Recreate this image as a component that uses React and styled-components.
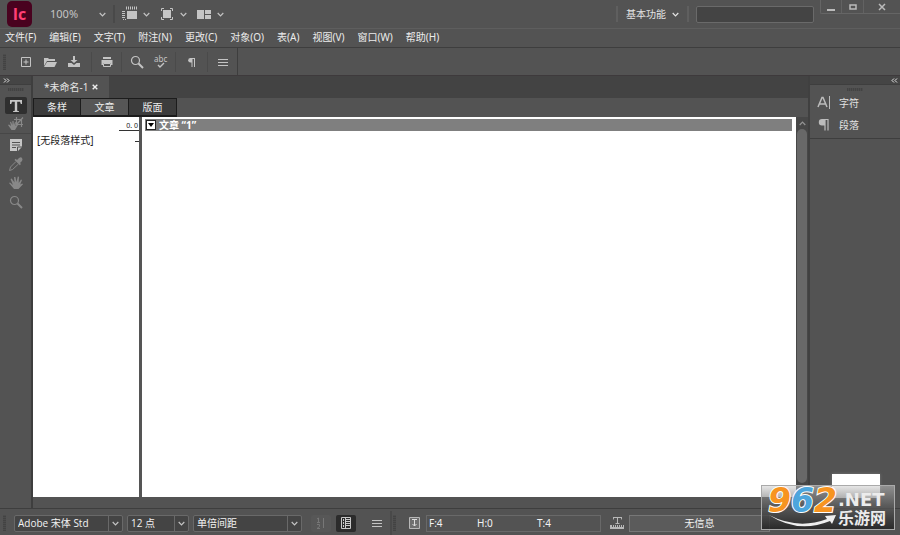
import React from "react";
import styled, { createGlobalStyle } from "styled-components";

const GlobalStyle = createGlobalStyle`
  * { box-sizing: border-box; }
  body {
    margin: 0;
    background: #535353;
    color: #e4e4e4;
    font: 10px/14px "Noto Sans", "Noto Sans CJK SC", sans-serif;
  }
  button, input, select { font: inherit; color: inherit; margin: 0; padding: 0; }
  svg { display: block; flex: none; }
`;

const Page = styled.div`
  display: flex;
  flex-direction: column;
  min-height: 100vh;
  position: relative;
  overflow: hidden;
`;

const PlainButton = styled.button`
  display: flex;
  align-items: center;
  justify-content: center;
  border: 0;
  background: none;
  color: #c4c4c4;
`;

/* Title bar */
const TitleBar = styled.header`
  display: flex;
  align-items: center;
  height: 28px;
  padding-left: 7px;
`;
const Logo = styled.div`
  width: 25px;
  height: 26px;
  border-radius: 5px;
  background: #49021f;
  color: #ff3f75;
  font: bold 16px/26px "Open Sans", sans-serif;
  text-align: center;
`;
const Zoom = styled(PlainButton)`
  width: 56px;
  margin-left: 18px;
  justify-content: space-between;
  font-size: 11px;
`;
const Separator = styled.span`
  width: 2px;
  height: ${(p) => p.$height || 18}px;
  margin: 0 ${(p) => p.$gap || 0}px;
  background: ${(p) => (p.$light ? "#5f5f5f" : "#494949")};
`;
const ViewButton = styled(PlainButton)`
  gap: 5px;
  width: 28px;
  margin-right: 9px;
`;
const Spacer = styled.span`
  flex: 1;
`;
const Workspace = styled(PlainButton)`
  gap: 6px;
  margin: 0 8px;
  color: #e4e4e4;
`;
const Search = styled.input`
  width: 118px;
  height: 17px;
  margin: 0 6px 0 7px;
  border: 1px solid #6a6a6a;
  border-radius: 2px;
  background: #444;
`;
const WindowControls = styled.div`
  display: flex;
  align-self: flex-start;
  width: 80px;
  height: 14px;
  border: 1px solid #656565;
  border-width: 0 0 1px 1px;
  border-bottom-left-radius: 2px;
`;
const WindowButton = styled(PlainButton)`
  flex: ${(p) => (p.$wide ? 37 : 21)};
  border-right: ${(p) => (p.$wide ? 0 : "1px solid #626262")};
`;

/* Menus and command bar */
const MenuBar = styled.nav`
  display: flex;
  align-items: center;
  gap: 13px;
  height: 20px;
  padding: 0 5px 2px;
  border-top: 1px solid #5e5e5e;
  border-bottom: 1px solid #3e3e3e;
`;
const MenuItem = styled(PlainButton)`
  color: #ececec;
  white-space: nowrap;
`;
const CommandBar = styled.div`
  display: flex;
  height: 28px;
  border-bottom: 1px solid #3e3a3c;
`;
const Commands = styled.div`
  display: flex;
  align-items: center;
  width: 238px;
  padding-left: 3px;
  border-right: 1px solid #3e3e3e;
`;
const Grip = styled.span`
  width: ${(p) => (p.$flat ? 16 : 3)}px;
  height: ${(p) => (p.$flat ? 3 : 16)}px;
  margin-right: ${(p) => p.$gap || 0}px;
  flex: none;
  background: repeating-linear-gradient(${(p) => (p.$flat ? "90deg" : "0deg")}, #434343 0 1px, #4c4c4c 1px 2px);
`;
const Command = styled(PlainButton)`
  width: 24px;
  height: 20px;
  margin-left: ${(p) => p.$gap || 0}px;
`;
const CommandGroup = styled.div`
  display: flex;
  justify-content: center;
  width: ${(p) => p.$width}px;
  border-right: ${(p) => (p.$last ? 0 : "1px solid #4a4a4a")};
`;

/* Work area */
const Workarea = styled.main`
  display: flex;
  flex: 1;
`;
const ToolStrip = styled.aside`
  display: flex;
  flex-direction: column;
  align-items: center;
  width: 33px;
  flex: none;
  border-right: 2px solid #3e3e3e;
`;
const StripHead = styled.div`
  display: flex;
  align-items: center;
  justify-content: ${(p) => (p.$end ? "flex-end" : "flex-start")};
  align-self: stretch;
  height: 9px;
  padding: 0 2px 0 3px;
  margin-bottom: 3px;
  background: #454545;
  border-bottom: 1px solid #3e3e3e;
`;
const Tool = styled(PlainButton)`
  width: 22px;
  height: ${(p) => (p.$active ? 17 : 19)}px;
  margin-top: ${(p) => p.$top || 0}px;
  border-radius: 2px;
  background: ${(p) => (p.$active ? "#2f2f2f" : "none")};
  color: ${(p) => (p.$bright ? "#c6c6c6" : "#888")};
`;
const Rule = styled.span`
  align-self: stretch;
  height: 1px;
  background: #474747;
`;
const DocumentArea = styled.section`
  display: flex;
  flex-direction: column;
  flex: 1;
  min-width: 0;
`;
const TabStrip = styled.div`
  display: flex;
  height: 22px;
  background: #434343;
`;
const FileTab = styled.div`
  display: flex;
  align-items: center;
  gap: 4px;
  padding: 0 11px;
  background: #535353;
`;
const ViewTabs = styled.div`
  display: flex;
  height: 19px;
`;
const ViewTab = styled(PlainButton)`
  width: 48px;
  border: 1px solid #1c1c1c;
  border-bottom-width: 2px;
  border-left-width: ${(p) => (p.$joined ? 0 : 1)}px;
  background: ${(p) => (p.$active ? "#565656" : "#3c3c3c")};
  color: #ececec;
`;
const Editor = styled.div`
  display: flex;
  flex: 1;
  margin-bottom: 11px;
`;
const StyleColumn = styled.div`
  width: 109px;
  flex: none;
  border-right: 3px solid #555;
  background: #fff;
  color: #222;
`;
const RulerHead = styled.div`
  display: flex;
  justify-content: flex-end;
  height: 14px;
`;
const RulerMark = styled.span`
  width: 20px;
  padding: 4px 1px 0 0;
  border-bottom: 1px solid #333;
  font-size: 7px;
  line-height: 10px;
  text-align: right;
`;
const ParagraphStyle = styled.div`
  display: flex;
  align-items: center;
  justify-content: space-between;
  height: 17px;
  padding-left: 4px;
`;
const Tick = styled.span`
  width: 4px;
  height: 1px;
  margin-top: 4px;
  background: #333;
`;
const Story = styled.article`
  flex: 1;
  min-width: 0;
  padding: 2px 4px 0 3px;
  background: #fff;
`;
const StoryHead = styled.h1`
  display: flex;
  align-items: center;
  gap: 3px;
  height: 12px;
  margin: 0;
  padding-left: 1px;
  background: #7f7f7f;
  color: #fff;
  font: bold 10px/12px "Noto Sans", "Noto Sans CJK SC", sans-serif;
`;
const Collapse = styled(PlainButton)`
  width: 10px;
  height: 10px;
  border: 1px solid #222;
  background: #fff;
  color: #000;
`;
const ScrollTrack = styled.div`
  display: flex;
  flex-direction: column;
  align-items: center;
  width: 12px;
  padding: 4px 0 14px;
  gap: 3px;
  background: #474747;
  color: #949494;
`;
const ScrollThumb = styled.div`
  width: 10px;
  flex: 1;
  border-radius: 5px;
  background: #686868;
`;
const SidePanel = styled.aside`
  width: 92px;
  flex: none;
  border-left: 2px solid #404040;
`;
const PanelGroup = styled.div`
  display: flex;
  flex-direction: column;
  align-items: center;
  height: 51px;
  border-bottom: 1px solid #3e3e3e;
`;
const PanelList = styled.div`
  align-self: stretch;
  padding-top: 1px;
`;
const PanelButton = styled(PlainButton)`
  width: 100%;
  justify-content: flex-start;
  gap: 6px;
  height: 22px;
  padding-left: 7px;
  color: #e2e2e2;
  svg { color: #bcbcbc; }
`;

/* Status bar */
const StatusBar = styled.footer`
  display: flex;
  align-items: center;
  height: 27px;
  padding: 2px 5px 0 3px;
  border-top: 1px solid #3e3e3e;
  color: #f2f2f2;
`;
const SelectBox = styled.label`
  display: grid;
  grid-template-columns: 1fr 14px;
  width: ${(p) => p.$width}px;
  height: 17px;
  margin-left: ${(p) => p.$gap}px;
  border: 1px solid #696969;
  border-radius: 2px;
  background: #444;
`;
const Select = styled.select`
  grid-area: 1 / 1 / 2 / 3;
  appearance: none;
  border: 0;
  padding-left: 3px;
  background: none;
  color: #f2f2f2;
  font-family: "Open Sans", "Noto Sans CJK SC", sans-serif;
  line-height: 15px;
`;
const Arrow = styled.span`
  grid-area: 1 / 2;
  display: flex;
  align-items: center;
  justify-content: center;
  border-left: 1px solid #696969;
  color: #c4c4c4;
  pointer-events: none;
`;
const Toggle = styled(PlainButton)`
  width: 20px;
  height: 17px;
  margin-left: ${(p) => p.$gap}px;
  border-radius: 2px;
  background: ${(p) => (p.$active ? "#2b2b2b" : "#575757")};
  color: ${(p) => (p.$active ? "#c8c8c8" : "#777")};
`;
const Readout = styled.div`
  display: flex;
  align-items: center;
  gap: 4px;
  margin-right: 8px;
  color: #b8b8b8;
`;
const Metrics = styled.div`
  display: grid;
  grid-template-columns: 48px 60px 1fr;
  align-items: center;
  width: 175px;
  height: 17px;
  padding-left: 2px;
  border: 1px solid #696969;
  color: #f2f2f2;
`;
const Info = styled.div`
  width: 141px;
  height: 17px;
  border: 1px solid #777;
  background: #5b5b5b;
  color: #f2f2f2;
  line-height: 14px;
  text-align: center;
`;

/* Corner mark */
const BlankCard = styled.div`
  position: absolute;
  right: 20px;
  bottom: 37px;
  width: 48px;
  height: 24px;
  background: #fff;
  box-shadow: 0 0 3px #777;
`;
const Mark = styled.div`
  position: absolute;
  right: 5px;
  bottom: 5px;
  display: flex;
  width: 134px;
  height: 45px;
  padding-left: 6px;
  border: 1px solid #aaa;
  background: linear-gradient(rgba(205,205,205,.5), rgba(95,95,95,.7) 45%, rgba(35,35,35,.85));
`;
const MarkNumber = styled.span`
  width: 70px;
  height: 30px;
  color: #f79420;
  font: italic bold 33px/30px "DejaVu Sans", sans-serif;
  -webkit-text-stroke: 2px #fff;
  paint-order: stroke fill;
  span { color: #4ca5dc; }
`;
const MarkNames = styled.div`
  display: flex;
  flex-direction: column;
  color: #ececec;
  padding-top: 3px;
  white-space: nowrap;
`;
const MarkDomain = styled.span`
  font: bold 18px/21px "DejaVu Sans", sans-serif;
`;
const MarkTitle = styled.span`
  font: bold 16px/18px "Liberation Sans", "Noto Sans CJK SC", sans-serif;
`;
const Swoosh = styled.svg`
  position: absolute;
  left: 7px;
  bottom: 2px;
`;

const Chevron = ({ up }) => (
  <svg width="7" height="5" viewBox="0 0 7 5" fill="none" stroke="currentColor" strokeWidth="1.2">
    <path d={up ? "M.7 4 3.5 1.2 6.3 4" : "M.7 1 3.5 3.8 6.3 1"} />
  </svg>
);

const Chevrons = ({ left }) => (
  <svg width="7" height="5" viewBox="0 0 7 5" fill="none" stroke="#e6e6e6">
    <path d={left ? "M3 .5 1 2.5l2 2M6 .5 4 2.5l2 2" : "M1 .5 3 2.5l-2 2M4 .5 6 2.5l-2 2"} />
  </svg>
);

const drawings = {
  frames: <><path d="M5 5h10v8H5z" fill="currentColor" /><path d="M1.5 5v7M4 2h11" stroke="currentColor" strokeDasharray="1 1" strokeWidth="3" /><path d="M1 13.5h3" stroke="currentColor" strokeDasharray="1 1" /></>,
  screen: <><path d="M4 4h8v8H4z" fill="currentColor" /><path d="M2.5 5V2.5H5m6 0h2.5V5m0 6v2.5H11m-6 0H2.5V11" stroke="currentColor" /></>,
  arrange: <path d="M1 4h7v9H1zm8 0h6v4H9zm0 5h6v4H9z" fill="currentColor" />,
  add: <path d="M3.5 3.5h9v9h-9zM8 5.5v5M5.5 8h5" stroke="currentColor" />,
  open: <><path d="M2 12V4h4l1 1h6v2H5z" fill="currentColor" /><path d="M5 8h10l-2.5 5H2z" fill="currentColor" /></>,
  save: <><path d="M7 2h2v4h2.5L8 9 4.500 6H7z" fill="currentColor" /><path d="M2 9h3.500L8 11l2.500-2H14v4H2z" fill="currentColor" /></>,
  print: <><path d="M4 3h8v2H4zM2.500 6h11v5H12V9H4v2H2.500z" fill="currentColor" /><path d="M4.500 9.500h7v3h-7z" stroke="currentColor" /></>,
  search: <><circle cx="6.500" cy="6.500" r="4" stroke="currentColor" strokeWidth="1.200" /><path d="m9.500 9.500 4.500 4.500" stroke="currentColor" strokeWidth="2" /></>,
  pilcrow: <><path d="M8 4H6.500a2.300 2.300 0 0 0 0 4.600H8z" fill="currentColor" /><path d="M8 4v9m2.500-9v9M6 4.500h5" stroke="currentColor" /></>,
  menu: <path d="M3 5.500h10M3 8.500h10M3 11.500h10" stroke="currentColor" />,
  type: <path d="M2 2h12v4h-1.200l-.8-2.300H9.200v9l1.800.5v.9H5v-.9l1.800-.5v-9H4L3.200 6H2z" fill="currentColor" />,
  handCrop: <><path d="m0 9 1-.6L3 10 2 6l1-.3L4.400 9V5h1.100l.5 4 1-3 1 .3L7.500 10 9 8.500l1 .5-3 5H3.500z" fill="currentColor" /><path d="M8.500 1v7.500H15M6 3.500h7.500V11M9 8l6-6.500" stroke="currentColor" strokeWidth="1.200" /></>,
  note: <><path d="M2 2h12v8l-4 4H2z" fill="currentColor" /><path d="M4 5.500h8M4 8h8M4 10.500h4M9.500 14v-4H14" stroke="#535353" /></>,
  dropper: <><path d="m9 4 2-2q2-1.500 3 0t0 3l-2 2 1 1-1.200 1.200L6.500 4l1.200-1.200z" fill="currentColor" /><path d="m8 5.500-5.500 5.500-1 3.500 3-1L10.500 8" stroke="currentColor" /></>,
  hand: <path d="m1 8 1-.6L5 10 2.500 4l1.200-.5L6.500 7.500 6 2h1.400L8.500 7l1.300-5.500 1.200.3L10.700 8 13 4.500l1 .5-1.800 4.500 2-1 .8.8L10.500 14H6z" fill="currentColor" />,
  character: <><path d="m1 12 4-9.500h1l4 9.500M2.500 9h6" stroke="currentColor" strokeWidth="1.500" /><path d="M12.500 1v13" stroke="currentColor" /></>,
  paragraph: <><path d="M8 2H5a3.200 3.200 0 0 0 0 6.400h3z" fill="currentColor" /><path d="M8 2v11.500m3-11.500v11.500M5 2.500h6.500" stroke="currentColor" strokeWidth="1.200" /></>,
  columns: <><path d="M3.500 2.500h9v11h-9zM7.500 3v10" stroke="currentColor" /><path d="M8 4.500h4M8 6.500h4M8 8.500h4M8 10.500h4" stroke="currentColor" /><path d="M5.500 4v8" stroke="currentColor" strokeDasharray="2 1" /></>,
  numbered: <path d="M10.500 3v10M4 4l1.500-1v4M4 7.500h3M4 9.500h2.500v2L4 13.500h3" stroke="currentColor" />,
  depth: <><path d="M3.500 2.500h10v11h-10z" fill="#6f6f6f" stroke="currentColor" /><path d="M6 4.500h5M8.500 4v7M6.500 9l2 2 2-2" stroke="#ddd" /></>,
  typeRuler: <><path d="M4 2h9v2.500h-.8L12 3H9v5h1.500v1h-4V8H8V3H5l-.2 1.500H4zM1 10h14v4H1z" fill="currentColor" /><path d="M3.500 10v2m2-2v2m2-2v2m2-2v2m2-2v2m2-2v2" stroke="#535353" /></>,
};

const Icon = ({ name }) => (
  <svg width="16" height="16" viewBox="0 0 16 16" fill="none" aria-hidden="true">
    {drawings[name]}
  </svg>
);

const SpellIcon = () => (
  <svg width="18" height="20" viewBox="0 0 18 20" fill="none">
    <text x="2" y="10" fill="currentColor" fontSize="8" fontFamily="Noto Sans">abc</text>
    <path d="m6 13 2 2 4-4" stroke="currentColor" strokeWidth="1.4" />
  </svg>
);

const menus = ["文件(F)", "编辑(E)", "文字(T)", "附注(N)", "更改(C)", "对象(O)", "表(A)", "视图(V)", "窗口(W)", "帮助(H)"];

function Dropdown({ label, value, width, gap }) {
  return (
    <SelectBox $width={width} $gap={gap}>
      <Select aria-label={label}>
        <option>{value}</option>
      </Select>
      <Arrow><Chevron /></Arrow>
    </SelectBox>
  );
}

export default function App() {
  return (
    <Page>
      <GlobalStyle />
      <TitleBar>
        <Logo>Ic</Logo>
        <Zoom>100%<Chevron /></Zoom>
        <Separator $gap={7} />
        <ViewButton aria-label="视图选项"><Icon name="frames" /><Chevron /></ViewButton>
        <ViewButton aria-label="屏幕模式"><Icon name="screen" /><Chevron /></ViewButton>
        <ViewButton aria-label="排列文档"><Icon name="arrange" /><Chevron /></ViewButton>
        <Spacer />
        <Separator $height={16} $light />
        <Workspace>基本功能<Chevron /></Workspace>
        <Separator $height={16} $light />
        <Search type="search" aria-label="搜索" />
        <WindowControls>
          <WindowButton aria-label="最小化">
            <svg width="8" height="10"><path d="M0 7h8v2H0z" fill="#bbb" /></svg>
          </WindowButton>
          <WindowButton aria-label="最大化">
            <svg width="8" height="8"><path d="M1 2h6v4H1z" fill="none" stroke="#bbb" strokeWidth="1.5" /></svg>
          </WindowButton>
          <WindowButton $wide aria-label="关闭">
            <svg width="8" height="8"><path d="m1 1 6 6m0-6L1 7" stroke="#bbb" strokeWidth="1.5" /></svg>
          </WindowButton>
        </WindowControls>
      </TitleBar>

      <MenuBar>{menus.map((m) => <MenuItem key={m}>{m}</MenuItem>)}</MenuBar>

      <CommandBar>
        <Commands>
          <Grip $gap={2} />
          <CommandGroup $width={84}>
            <Command aria-label="新建"><Icon name="add" /></Command>
            <Command aria-label="打开"><Icon name="open" /></Command>
            <Command aria-label="保存"><Icon name="save" /></Command>
          </CommandGroup>
          <CommandGroup $width={30}><Command aria-label="打印"><Icon name="print" /></Command></CommandGroup>
          <CommandGroup $width={54}>
            <Command aria-label="查找"><Icon name="search" /></Command>
            <Command aria-label="拼写检查"><SpellIcon /></Command>
          </CommandGroup>
          <CommandGroup $width={32}><Command aria-label="隐藏字符"><Icon name="pilcrow" /></Command></CommandGroup>
          <CommandGroup $width={29} $last><Command aria-label="菜单"><Icon name="menu" /></Command></CommandGroup>
        </Commands>
      </CommandBar>

      <Workarea>
        <ToolStrip>
          <StripHead><Chevrons /></StripHead>
          <Grip $flat />
          <Tool $active $bright $top={6} aria-label="文字工具"><Icon name="type" /></Tool>
          <Tool aria-label="位置工具"><Icon name="handCrop" /></Tool>
          <Rule />
          <Tool $bright $top={1} aria-label="附注工具"><Icon name="note" /></Tool>
          <Tool aria-label="吸管工具"><Icon name="dropper" /></Tool>
          <Tool aria-label="抓手工具"><Icon name="hand" /></Tool>
          <Tool aria-label="缩放工具"><Icon name="search" /></Tool>
        </ToolStrip>

        <DocumentArea>
          <TabStrip>
            <FileTab>
              *未命名-1
              <PlainButton aria-label="关闭文档">
                <svg width="6" height="6"><path d="m.7.7 4.6 4.6m0-4.6L.7 5.3" stroke="#eee" strokeWidth="1.4" /></svg>
              </PlainButton>
            </FileTab>
          </TabStrip>
          <ViewTabs>
            <ViewTab>条样</ViewTab>
            <ViewTab $active $joined>文章</ViewTab>
            <ViewTab $joined>版面</ViewTab>
          </ViewTabs>
          <Editor>
            <StyleColumn>
              <RulerHead><RulerMark>0. 0</RulerMark></RulerHead>
              <ParagraphStyle>[无段落样式]<Tick /></ParagraphStyle>
            </StyleColumn>
            <Story>
              <StoryHead>
                <Collapse aria-label="折叠文章">
                  <svg width="6" height="4"><path d="M0 0h6L3 4z" fill="currentColor" /></svg>
                </Collapse>
                文章 “1”
              </StoryHead>
            </Story>
            <ScrollTrack><Chevron up /><ScrollThumb /></ScrollTrack>
          </Editor>
        </DocumentArea>

        <SidePanel>
          <StripHead $end><Chevrons left /></StripHead>
          <PanelGroup>
            <Grip $flat />
            <PanelList>
              <PanelButton><Icon name="character" />字符</PanelButton>
              <PanelButton><Icon name="paragraph" />段落</PanelButton>
            </PanelList>
          </PanelGroup>
        </SidePanel>
      </Workarea>

      <StatusBar>
        <Grip />
        <Dropdown label="字体" value="Adobe 宋体 Std" width={109} gap={8} />
        <Dropdown label="字号" value="12 点" width={62} gap={4} />
        <Dropdown label="行距" value="单倍间距" width={109} gap={4} />
        <Toggle $gap={9} aria-label="行号"><Icon name="numbered" /></Toggle>
        <Toggle $active $gap={5} aria-label="样式列"><Icon name="columns" /></Toggle>
        <Command $gap={9} aria-label="选项"><Icon name="menu" /></Command>
        <Separator $height={24} $gap={1} />
        <Grip $gap={10} />
        <Readout><Icon name="depth" /><Metrics><span>F:4</span><span>H:0</span><span>T:4</span></Metrics></Readout>
        <Readout><Icon name="typeRuler" /><Info>无信息</Info></Readout>
      </StatusBar>

      <BlankCard />
      <Mark>
        <MarkNumber>9<span>6</span>2</MarkNumber>
        <MarkNames>
          <MarkDomain>.NET</MarkDomain>
          <MarkTitle>乐游网</MarkTitle>
        </MarkNames>
        <Swoosh width="68" height="12" viewBox="0 0 68 12">
          <path d="M0 0q29 15 58 4l-2-3 11-1-4 9-2-3Q29 19 0 0z" fill="#eee" />
        </Swoosh>
      </Mark>
    </Page>
  );
}
